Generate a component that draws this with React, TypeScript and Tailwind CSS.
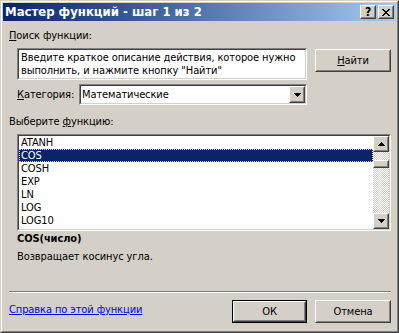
import React from 'react';

const items = ['ATANH', 'COS', 'COSH', 'EXP', 'LN', 'LOG', 'LOG10'];

const Raised = ({ className = '', children }: { className?: string; children?: React.ReactNode }) => (
  <div className={`border border-t-white border-l-white border-r-[#404040] border-b-[#404040] bg-[#d4d0c8] ${className}`}>
    <div className="flex h-full w-full items-center justify-center border border-t-[#d4d0c8] border-l-[#d4d0c8] border-r-[#808080] border-b-[#808080]">
      {children}
    </div>
  </div>
);

const Sunken = ({ className = '', children }: { className?: string; children?: React.ReactNode }) => (
  <div className={`border border-t-[#808080] border-l-[#808080] border-r-white border-b-white ${className}`}>
    <div className="flex h-full w-full border border-t-[#404040] border-l-[#404040] border-r-[#d4d0c8] border-b-[#d4d0c8] bg-white">
      {children}
    </div>
  </div>
);

const ArrowDown = () => (
  <svg width="7" height="4" viewBox="0 0 7 4" shapeRendering="crispEdges">
    <path d="M0 0h7v1H0zM1 1h5v1H1zM2 2h3v1H2zM3 3h1v1H3z" fill="#000" />
  </svg>
);

const ArrowUp = () => (
  <svg width="7" height="4" viewBox="0 0 7 4" shapeRendering="crispEdges">
    <path d="M3 0h1v1H3zM2 1h3v1H2zM1 2h5v1H1zM0 3h7v1H0z" fill="#000" />
  </svg>
);

const CloseGlyph = () => (
  <svg width="8" height="7" viewBox="0 0 8 7" shapeRendering="crispEdges">
    <path
      d="M0 0h2v1H0zM6 0h2v1H6zM1 1h2v1H1zM5 1h2v1H5zM2 2h4v1H2zM3 3h2v1H3zM2 4h4v1H2zM1 5h2v1H1zM5 5h2v1H5zM0 6h2v1H0zM6 6h2v1H6z"
      fill="#000"
    />
  </svg>
);

const checker =
  'bg-[image:repeating-conic-gradient(#ffffff_0_25%,#d4d0c8_0_50%)] bg-[length:2px_2px]';

const App: React.FC = () => {
  return (
    <div className="h-[333px] w-[399px] bg-[#d4d0c8] font-['DejaVu_Sans_Condensed','DejaVu_Sans',sans-serif] text-[11px] leading-[13px] tracking-[-0.1px] text-black">
      <div className="h-full w-full border border-t-[#d4d0c8] border-l-[#d4d0c8] border-r-[#404040] border-b-[#404040]">
        <div className="flex h-full w-full flex-col border border-t-white border-l-white border-r-[#808080] border-b-[#808080] p-px">
          {/* Title bar */}
          <div className="flex h-[18px] items-center bg-linear-to-r from-[#0a246a] to-[#a6caf0] px-[2px]">
            <span className="flex-1 text-[13px] leading-[18px] font-bold tracking-normal text-white">
              Мастер функций - шаг 1 из 2
            </span>
            <Raised className="h-[14px] w-[16px]">
              <span className="text-[12px] leading-[10px] font-bold">?</span>
            </Raised>
            <Raised className="ml-[2px] h-[14px] w-[16px]">
              <CloseGlyph />
            </Raised>
          </div>

          {/* Body */}
          <div className="flex flex-1 flex-col pl-[6px] pr-[5px]">
            <div className="mt-[8px]">
              <span className="underline">П</span>оиск функции:
            </div>

            <div className="mt-[6px] flex">
              <Sunken className="ml-[8px] h-[32px] w-[290px]">
                <div className="pl-[2px] pt-[1px]">
                  Введите краткое описание действия, которое нужно
                  <br />
                  выполнить, и нажмите кнопку "Найти"
                </div>
              </Sunken>
              <Raised className="ml-[8px] mt-[1px] h-[23px] w-[76px]">
                <span>
                  <span className="underline">Н</span>айти
                </span>
              </Raised>
            </div>

            <div className="mt-[4px] flex items-center">
              <div className="ml-[8px] w-[62px]">
                <span className="underline">К</span>атегория:
              </div>
              <Sunken className="h-[21px] w-[228px]">
                <div className="flex flex-1 items-center pl-[1px]">Математические</div>
                <Raised className="h-full w-[16px]">
                  <ArrowDown />
                </Raised>
              </Sunken>
            </div>

            <div className="mt-[10px]">
              Выберите <span className="underline">ф</span>ункцию:
            </div>

            <Sunken className="ml-[8px] mt-[6px] h-[97px] w-[374px]">
              <div className="flex-1 overflow-hidden">
                {items.map((name) => (
                  <div
                    key={name}
                    className={
                      name === 'COS'
                        ? 'h-[13px] bg-[#0a246a] pl-[2px] text-white outline-1 -outline-offset-1 outline-dotted outline-[#e8d890]'
                        : 'h-[13px] pl-[2px]'
                    }
                  >
                    {name}
                  </div>
                ))}
              </div>
              <div className="flex w-[16px] flex-col">
                <Raised className="h-[16px] w-[16px]">
                  <ArrowUp />
                </Raised>
                <div className={`h-[8px] ${checker}`} />
                <Raised className="h-[8px] w-[16px]" />
                <div className={`flex-1 ${checker}`} />
                <Raised className="h-[16px] w-[16px]">
                  <ArrowDown />
                </Raised>
              </div>
            </Sunken>

            <div className="ml-[8px] mt-[1px] font-bold">COS(число)</div>
            <div className="ml-[8px] mt-[5px]">Возвращает косинус угла.</div>

            <div className="mt-[28px] h-[2px] border-t border-b border-t-[#808080] border-b-white" />

            <div className="mt-[7px] flex">
              <a href="#" className="mt-[3px] text-[#0000ff] underline">
                Справка по этой функции
              </a>
              <div className="ml-auto h-[23px] w-[75px] border border-black">
                <Raised className="h-full w-full">ОК</Raised>
              </div>
              <Raised className="ml-[8px] h-[23px] w-[76px]">Отмена</Raised>
            </div>
          </div>
        </div>
      </div>
    </div>
  );
};

export default App;
